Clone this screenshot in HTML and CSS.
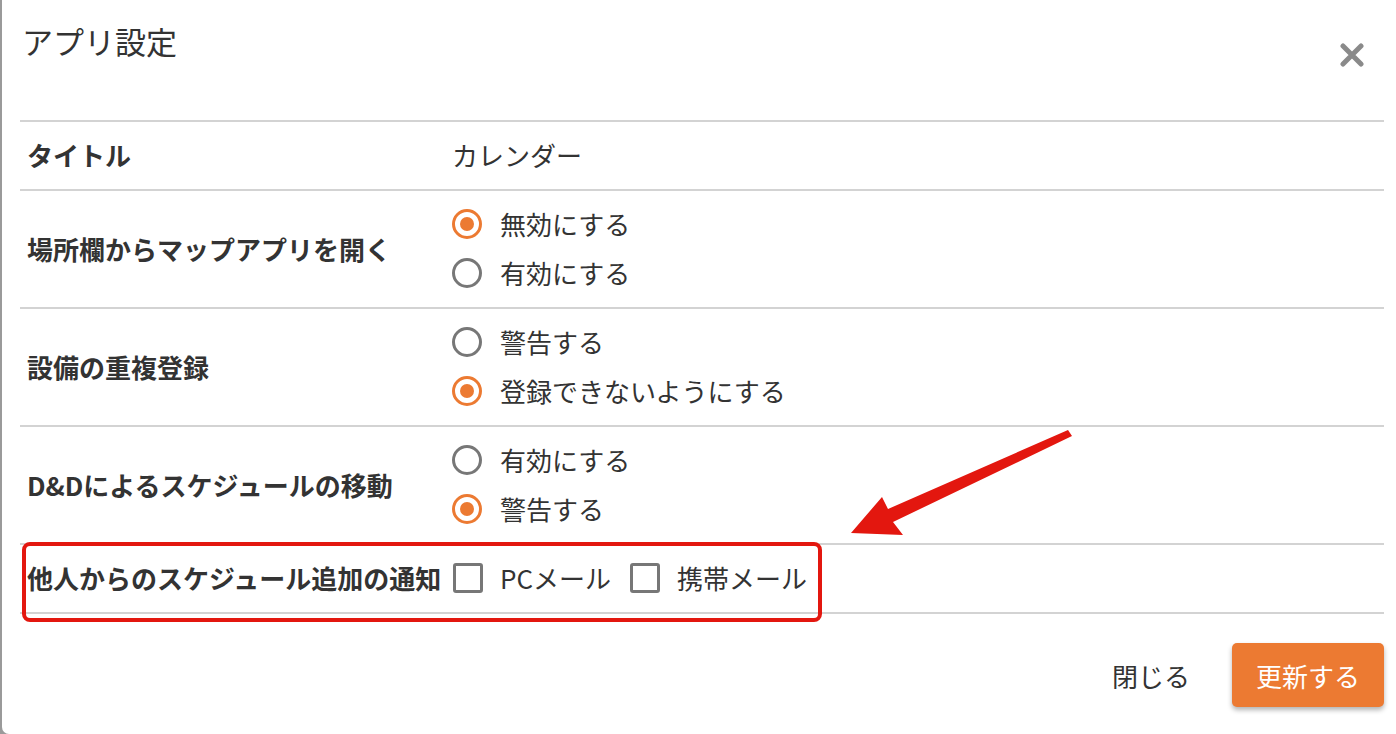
FILE: index.html
```html
<!DOCTYPE html>
<html lang="ja">
<head>
  <meta charset="UTF-8">
  <title>アプリ設定</title>
  <link rel="stylesheet" href="styles.css">
</head>
<body>

  <div class="modal">
    <div class="modal-head">
      <h1>アプリ設定</h1>
      <button class="close" aria-label="閉じる">
        <svg width="24" height="24" viewBox="0 0 24 24">
          <path d="M3 3 L21 21 M21 3 L3 21" stroke="#8a8a8a" stroke-width="5" stroke-linecap="round" fill="none"/>
        </svg>
      </button>
    </div>

    <div class="settings">
      <div class="row">
        <div class="label">タイトル</div>
        <div class="value">
          <div class="opt">カレンダー</div>
        </div>
      </div>

      <div class="row">
        <div class="label">場所欄からマップアプリを開く</div>
        <div class="value">
          <label class="opt"><span class="radio checked"></span>無効にする</label>
          <label class="opt"><span class="radio"></span>有効にする</label>
        </div>
      </div>

      <div class="row">
        <div class="label">設備の重複登録</div>
        <div class="value">
          <label class="opt"><span class="radio"></span>警告する</label>
          <label class="opt"><span class="radio checked"></span>登録できないようにする</label>
        </div>
      </div>

      <div class="row">
        <div class="label">D&amp;Dによるスケジュールの移動</div>
        <div class="value">
          <label class="opt"><span class="radio"></span>有効にする</label>
          <label class="opt"><span class="radio checked"></span>警告する</label>
        </div>
      </div>

      <div class="row">
        <div class="label">他人からのスケジュール追加の通知</div>
        <div class="value inline">
          <label class="opt"><span class="check"></span>PCメール</label>
          <label class="opt"><span class="check"></span>携帯メール</label>
        </div>
      </div>
    </div>

    <div class="modal-foot">
      <button class="btn-text">閉じる</button>
      <button class="btn-primary">更新する</button>
    </div>
  </div>

  <!-- annotation -->
  <div class="highlight"></div>
  <svg class="arrow" width="1396" height="734" viewBox="0 0 1396 734">
    <polygon points="851,533 882,497 888,509 1068,430 1072,436 893,522 903,535" fill="#e3170f"/>
  </svg>

</body>
</html>
```

FILE: styles.css
```css
html, body {
  margin: 0;
  height: 100%;
}

body {
  font-family: "Noto Sans CJK JP", "Noto Sans", sans-serif;
  color: #333;
  background: #9a9a9a;
  overflow: hidden;
  position: relative;
}

button {
  font-family: inherit;
  border: none;
  background: none;
  padding: 0;
  cursor: pointer;
}

.modal {
  margin-left: 2px;
  width: 1394px;
  height: 734px;
  box-sizing: border-box;
  padding: 0 12px 0 18px;
  background: #fff;
  border-radius: 0 0 0 7px;
}

.modal-head {
  height: 120px;
  display: flex;
  justify-content: space-between;
  align-items: flex-start;
  padding-left: 2px;
}

.modal-head h1 {
  margin: 0;
  padding-top: 20px;
  font-size: 31px;
  font-weight: 400;
  line-height: 42px;
  color: #333;
}

.close {
  margin-top: 43px;
  margin-right: 20px;
  width: 24px;
  height: 24px;
}

.settings {
  border-top: 2px solid #d3d3d3;
}

.row {
  display: grid;
  grid-template-columns: 432px 1fr;
  align-items: center;
  padding: 8px 0 10px;
  border-bottom: 2px solid #d3d3d3;
}

.label {
  padding-left: 7px;
  font-size: 26px;
  font-weight: 700;
  color: #333;
}

.value {
  display: flex;
  flex-direction: column;
}

.value.inline {
  flex-direction: row;
  gap: 18px;
}

.opt {
  display: flex;
  align-items: center;
  height: 49px;
  font-size: 26px;
  color: #333;
}

.radio {
  width: 24px;
  height: 24px;
  border: 3px solid #777;
  border-radius: 50%;
  margin-right: 18px;
  display: flex;
  align-items: center;
  justify-content: center;
}

.radio.checked {
  border-color: #ec7a32;
}

.radio.checked::after {
  content: "";
  width: 14px;
  height: 14px;
  border-radius: 50%;
  background: #ec7a32;
}

.check {
  width: 24px;
  height: 24px;
  border: 3px solid #777;
  border-radius: 3px;
  margin-left: 1px;
  margin-right: 17px;
}

.modal-foot {
  display: flex;
  justify-content: flex-end;
  align-items: center;
  padding-top: 29px;
}

.btn-text {
  font-size: 26px;
  color: #333;
  margin-right: 42px;
}

.btn-primary {
  width: 152px;
  height: 64px;
  font-size: 26px;
  color: #fff;
  background: #ec7a32;
  border-radius: 5px;
  box-shadow: 0 3px 5px rgba(0, 0, 0, 0.3);
}

/* annotation overlay */
.highlight {
  position: absolute;
  left: 22px;
  top: 542px;
  width: 800px;
  height: 80px;
  box-sizing: border-box;
  border: 4px solid #e3170f;
  border-radius: 8px;
}

.arrow {
  position: absolute;
  left: 0;
  top: 0;
  pointer-events: none;
}
```
